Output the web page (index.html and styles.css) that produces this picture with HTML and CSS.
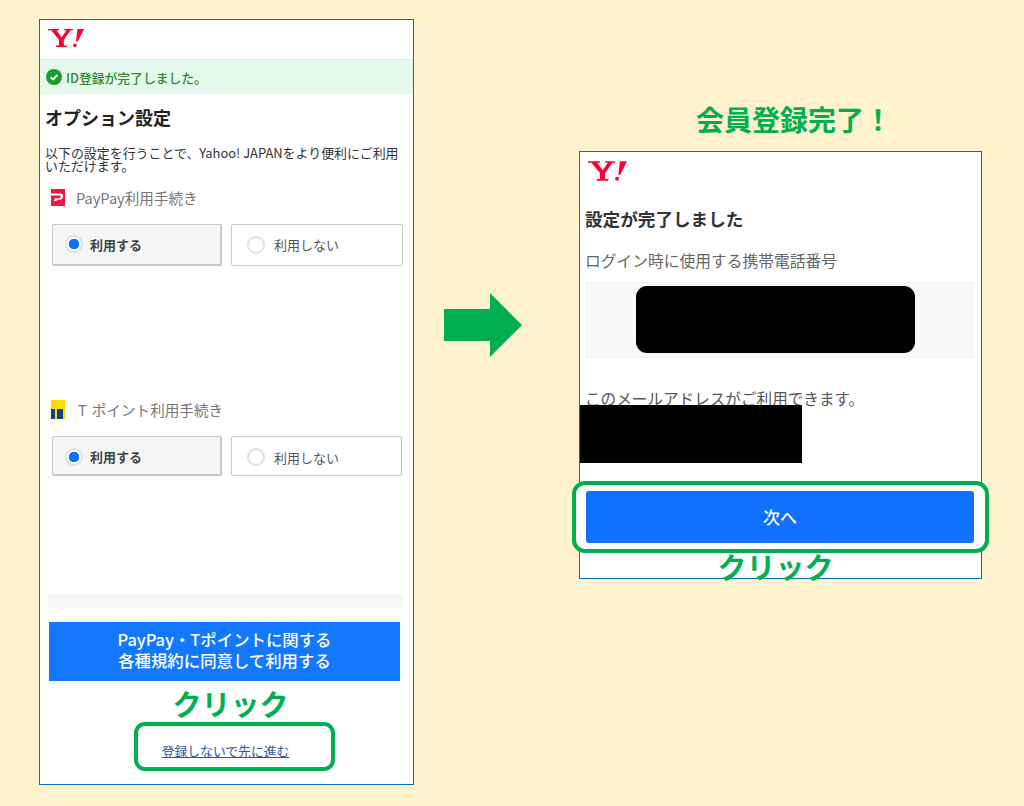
FILE: index.html
```html
<!DOCTYPE html>
<html lang="ja">
<head>
<meta charset="utf-8">
<title>会員登録完了</title>
<link rel="stylesheet" href="styles.css">
</head>
<body>
<main class="stage">
  <section class="phone phone-left">
    <header class="brand">
      <svg class="logo" viewBox="0 0 36 18" role="img" aria-label="Yahoo! JAPAN"><path d="M0 0H11V1.3H8.6L13.6 8.4 18.4 1.3H15.8V0H25V1.3H22.6L15.8 10.8V16.4H18.8V18H8V16.4H11V10.8L3.2 1.3H0Z"/><path d="M29.5 0H36L29.8 12.5H28Z"/><circle cx="26.8" cy="16.2" r="1.8"/></svg>
    </header>
    <div class="notice">
      <svg class="notice-icon" viewBox="0 0 16 16" aria-hidden="true"><circle cx="8" cy="8" r="8" fill="#1c9c2c"/><path d="M4.6 8.2 7 10.4 11.4 6" fill="none" stroke="#fff" stroke-width="1.8"/></svg>
      <span>ID登録が完了しました。</span>
    </div>
    <h1 class="title-left">オプション設定</h1>
    <p class="lead">以下の設定を行うことで、Yahoo! JAPANをより便利にご利用<br>いただけます。</p>

    <div class="service service-paypay">
      <svg class="service-icon" viewBox="0 0 14 17" aria-hidden="true"><rect width="14" height="17" fill="#f0173c"/><path d="M0 4.5H9.5Q12.2 4.5 12.2 7.3 12.2 10.2 9 10.5L2.5 12.5 4 9.2H8.7Q9.7 9 9.7 7.5 9.7 6.5 8.7 6.5H0Z" fill="#fff"/></svg>
      <span>PayPay利用手続き</span>
    </div>
    <div class="choices choices-first">
      <div class="choice choice-on"><span class="radio radio-on"></span><span>利用する</span></div>
      <div class="choice choice-off choice-wide"><span class="radio"></span><span>利用しない</span></div>
    </div>
    <div class="faint"></div>

    <div class="service service-t">
      <svg class="service-icon t-icon" viewBox="0 0 14 19" aria-hidden="true"><rect width="14" height="19" fill="#ffdc00"/><rect y="9" width="4" height="10" fill="#0f3f8f"/><rect x="6" y="9" width="6" height="10" fill="#0f3f8f"/></svg>
      <span><span class="t-letter">T</span>ポイント利用手続き</span>
    </div>
    <div class="choices choices-second">
      <div class="choice choice-on"><span class="radio radio-on"></span><span>利用する</span></div>
      <div class="choice choice-off"><span class="radio"></span><span>利用しない</span></div>
    </div>
    <div class="bar"></div>
    <div class="agree">PayPay・Tポイントに関する<br>各種規約に同意して利用する</div>
    <div class="click click-left">クリック</div>
    <div class="frame frame-left"><a class="skip" href="#">登録しないで先に進む</a></div>
  </section>

  <svg class="arrow" viewBox="0 0 78 64" aria-hidden="true"><path d="M0 16H46V0L78 32 46 64V48H0Z" fill="#00b050"/></svg>

  <div class="right-col">
    <div class="headline">会員登録完了！</div>
    <section class="phone phone-right">
      <header class="brand brand-right">
        <svg class="logo logo-right" viewBox="0 0 36 18" role="img" aria-label="Yahoo! JAPAN"><path d="M0 0H11V1.3H8.6L13.6 8.4 18.4 1.3H15.8V0H25V1.3H22.6L15.8 10.8V16.4H18.8V18H8V16.4H11V10.8L3.2 1.3H0Z"/><path d="M29.5 0H36L29.8 12.5H28Z"/><circle cx="26.8" cy="16.2" r="1.8"/></svg>
      </header>
      <h2 class="title-right">設定が完了しました</h2>
      <p class="phone-label">ログイン時に使用する携帯電話番号</p>
      <div class="number-box"><div class="mask-number"></div></div>
      <p class="mail-label">このメールアドレスがご利用できます。</p>
      <div class="mask-mail"></div>
      <div class="frame frame-right"><div class="next">次へ</div></div>
      <div class="click click-right">クリック</div>
    </section>
  </div>
</main>
</body>
</html>
```

FILE: styles.css
```css
* { box-sizing: border-box; }
html, body { margin: 0; padding: 0; }
body {
  width: 1024px;
  height: 806px;
  overflow: hidden;
  background: #fff2cc;
  font-family: "Noto Sans CJK JP", "Noto Sans", sans-serif;
  color: #333;
}
h1, h2, p { margin: 0; }

.stage {
  display: flex;
  align-items: flex-start;
  padding: 19px 0 0 39px;
}
.phone {
  background: #fff;
  border: 1px solid #0070c0;
  flex: none;
}
.phone-left { width: 375px; height: 766px; }
.phone-right { width: 403px; height: 428px; }

.brand {
  height: 40px;
  padding: 9px 0 0 8px;
  border-bottom: 1px solid #e6e6e6;
}
.brand-right { height: 30px; border-bottom: 0; }
.logo { display: block; width: 36px; height: 18px; fill: #ff0033; }
.logo-right { width: 39px; height: 20px; }

.notice {
  display: flex;
  align-items: center;
  gap: 4px;
  height: 34px;
  padding-left: 6px;
  background: #e4f9ec;
  font-size: 12.8px;
  font-weight: 500;
  color: #2c8a2c;
}
.notice-icon { width: 16px; height: 16px; flex: none; }

.title-left {
  margin: 12px 0 0 5px;
  font-size: 18px;
  line-height: 22px;
  font-weight: 700;
  color: #222;
}
.lead {
  margin: 19px 0 0 5px;
  font-size: 12.95px;
  line-height: 12.5px;
  white-space: nowrap;
  color: #333;
}
.service {
  display: flex;
  align-items: center;
  height: 22px;
  margin-left: 11px;
  font-size: 14.6px;
  color: #777;
}
.service-paypay { margin-top: 14px; gap: 11px; }
.service-t { margin-top: 21px; gap: 13px; }
.t-letter { margin-right: 5px; }
.service-icon { width: 14px; height: 17px; flex: none; }
.t-icon { height: 19px; }

.choices {
  display: flex;
  gap: 9px;
  margin-left: 12px;
}
.choices-first { margin-top: 16px; height: 42px; }
.choices-first .choice { padding-bottom: 1px; }
.choices-second { margin-top: 16px; height: 40px; }
.choices-second .choice { padding-top: 2px; }
.choice {
  display: flex;
  align-items: center;
  border: 1px solid #c8c8c8;
  border-radius: 2px;
  font-size: 13px;
}
.choice-on {
  width: 170px;
  gap: 7px;
  padding-left: 12px;
  background: #f6f6f6;
  border-right-width: 2px;
  border-bottom-width: 2px;
  font-weight: 700;
  color: #444;
}
.choice-off {
  width: 171px;
  gap: 9px;
  padding-left: 15px;
  color: #555;
}
.choice-wide { width: 172px; }
.radio {
  width: 18px;
  height: 18px;
  flex: none;
  border: 2px solid #e0e0e0;
  border-radius: 50%;
  background: #fff;
}
.radio-on {
  background: radial-gradient(circle, #1070ff 0 5px, #fff 5.5px);
}
.faint {
  width: 352px;
  height: 92px;
  margin: 19px 0 0 9px;
  border-top: 1px solid #fafafa;
  border-left: 1px solid #fafafa;
}
.bar {
  width: 355px;
  height: 14px;
  margin: 118px 0 0 8px;
  background: #f7f7f7;
}
.agree {
  width: 351px;
  height: 59px;
  margin: 14px 0 0 9px;
  padding-top: 7px;
  background: #1478ff;
  color: #fff;
  font-size: 16.4px;
  line-height: 21px;
  text-align: center;
  font-weight: 500;
}
.click {
  font-size: 29px;
  line-height: 30px;
  font-weight: 700;
  color: #00b050;
  text-align: center;
}
.click-left { width: 381px; margin-top: 7px; }
.frame {
  background: #fff;
  border: 4px solid #00b050;
  border-radius: 11px;
}
.frame-left {
  display: flex;
  justify-content: center;
  width: 201px;
  height: 49px;
  margin: 4px 0 0 94px;
  padding: 16px 18px 0 0;
}
.skip {
  font-size: 12.8px;
  line-height: 18px;
  color: #2a55a5;
  text-decoration: underline;
  white-space: nowrap;
}

.arrow {
  flex: none;
  width: 78px;
  height: 64px;
  margin: 274px 0 0 30px;
}

.right-col { flex: none; margin: 83px 0 0 57px; width: 403px; }
.headline {
  padding-left: 117px;
  font-size: 28px;
  line-height: 34px;
  font-weight: 700;
  color: #00b050;
  white-space: nowrap;
  margin-bottom: 15px;
}
.title-right {
  margin: 26px 0 0 5px;
  font-size: 17.6px;
  line-height: 22px;
  font-weight: 700;
  color: #333;
}
.phone-label {
  margin: 21px 0 0 5px;
  font-size: 15.75px;
  line-height: 20px;
  color: #666;
}
.number-box {
  width: 387px;
  height: 76px;
  margin: 11px 0 0 6px;
  padding: 3px 0 0 49px;
  background: #f9f9f9;
  border: 1px solid #f1f1f1;
}
.mask-number {
  width: 279px;
  height: 67px;
  background: #000;
  border-radius: 11px;
}
.mail-label {
  margin: 30px 0 0 5px;
  font-size: 15.6px;
  line-height: 20px;
  color: #555;
  white-space: nowrap;
}
.mask-mail {
  width: 222px;
  height: 58px;
  margin-top: -3px;
  background: #000;
  position: relative;
}
.frame-right {
  width: 417px;
  height: 72px;
  margin: 18px 0 0 -8px;
  padding: 6px 11px 6px 10px;
  border-radius: 13px;
  position: relative;
}
.next {
  height: 52px;
  background: #1070ff;
  border-radius: 3px;
  color: #fff;
  font-size: 17px;
  font-weight: 500;
  line-height: 52px;
  text-align: center;
}
.click-right {
  width: 391px;
  margin-top: -2px;
  position: relative;
}
```
